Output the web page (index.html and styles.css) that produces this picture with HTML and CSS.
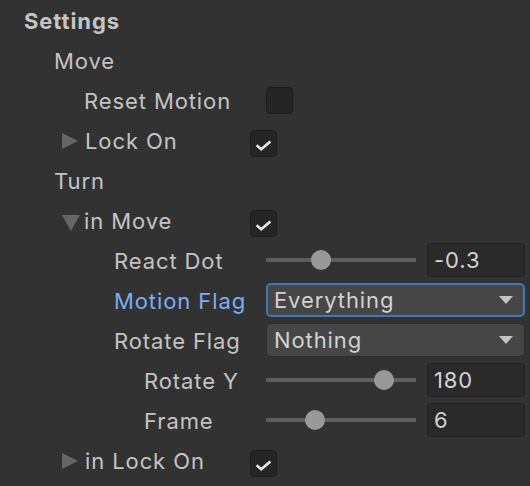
FILE: index.html
```html
<!DOCTYPE html>
<html>
<head>
<meta charset="utf-8">
<link rel="stylesheet" href="styles.css">
</head>
<body>
<div class="inspector">
  <div class="row"><div class="label i0 bold">Settings</div></div>
  <div class="row"><div class="label i1">Move</div></div>
  <div class="row">
    <div class="label i2">Reset Motion</div>
    <div class="field"><span class="checkbox"></span></div>
  </div>
  <div class="row">
    <div class="label fold"><span class="arrow-right"></span><span>Lock On</span></div>
    <div class="field"><span class="checkbox checked shifted"><svg width="17" height="11" viewBox="0 0 17 11"><path d="M1.6 5.2 L6.2 9.2 L15.4 1.4" fill="none" stroke="#e8e8e8" stroke-width="2.6"/></svg></span></div>
  </div>
  <div class="row"><div class="label i1">Turn</div></div>
  <div class="row">
    <div class="label fold"><span class="arrow-down"></span><span>in Move</span></div>
    <div class="field"><span class="checkbox checked shifted"><svg width="17" height="11" viewBox="0 0 17 11"><path d="M1.6 5.2 L6.2 9.2 L15.4 1.4" fill="none" stroke="#e8e8e8" stroke-width="2.6"/></svg></span></div>
  </div>
  <div class="row">
    <div class="label i3">React Dot</div>
    <div class="field">
      <div class="slider"><span class="track"></span><span class="knob" style="left:45px"></span></div>
      <div class="input">-0.3</div>
    </div>
  </div>
  <div class="row">
    <div class="label i3 focus">Motion Flag</div>
    <div class="field"><div class="dropdown active"><span>Everything</span><span class="caret"></span></div></div>
  </div>
  <div class="row">
    <div class="label i3">Rotate Flag</div>
    <div class="field"><div class="dropdown"><span>Nothing</span><span class="caret"></span></div></div>
  </div>
  <div class="row">
    <div class="label i4">Rotate Y</div>
    <div class="field">
      <div class="slider"><span class="track"></span><span class="knob" style="left:108px"></span></div>
      <div class="input">180</div>
    </div>
  </div>
  <div class="row">
    <div class="label i4">Frame</div>
    <div class="field">
      <div class="slider"><span class="track"></span><span class="knob" style="left:39px"></span></div>
      <div class="input">6</div>
    </div>
  </div>
  <div class="row">
    <div class="label fold"><span class="arrow-right"></span><span>in Lock On</span></div>
    <div class="field"><span class="checkbox checked shifted"><svg width="17" height="11" viewBox="0 0 17 11"><path d="M1.6 5.2 L6.2 9.2 L15.4 1.4" fill="none" stroke="#e8e8e8" stroke-width="2.6"/></svg></span></div>
  </div>
</div>
</body>
</html>
```

FILE: styles.css
```css
html, body {
  margin: 0;
  background: #323232;
}

body {
  font-family: Inter, "Noto Sans", sans-serif;
  font-size: 22px;
  letter-spacing: 0.9px;
  color: #c4c4c4;
}

.inspector {
  width: 525px;
  display: flex;
  flex-direction: column;
}

.row {
  height: 40px;
  display: flex;
  align-items: center;
}

.label {
  width: 266px;
  flex: none;
  box-sizing: border-box;
  display: flex;
  align-items: center;
  white-space: nowrap;
  padding-top: 1px;
}

.bold { font-weight: 700; }
.focus { color: #7cadf7; }

.i0 { padding-left: 24px; }
.i1 { padding-left: 54px; }
.i2 { padding-left: 84px; }
.i3 { padding-left: 114px; }
.i4 { padding-left: 144px; }

.fold {
  padding-left: 62px;
  gap: 7px;
}

.arrow-right {
  width: 0;
  height: 0;
  border-top: 8.5px solid transparent;
  border-bottom: 8.5px solid transparent;
  border-left: 16px solid #666666;
}

.arrow-down {
  width: 0;
  height: 0;
  border-left: 9.5px solid transparent;
  border-right: 9.5px solid transparent;
  border-top: 16px solid #666666;
  margin-right: -3px;
  margin-top: 4px;
}

.field {
  flex: 1;
  display: flex;
  align-items: center;
  gap: 11px;
}

.checkbox {
  width: 27px;
  height: 27px;
  box-sizing: border-box;
  background: #252525;
  border: 1px solid #1c1c1c;
  border-radius: 4px;
  display: flex;
  align-items: center;
  justify-content: center;
}

.checkbox.shifted {
  margin-left: -16px;
  margin-top: 7px;
}

.checkbox svg {
  margin-top: 4px;
}

.slider {
  position: relative;
  flex: 1;
  height: 20px;
  display: flex;
  align-items: center;
}

.track {
  flex: 1;
  height: 4px;
  background: #5e5e5e;
}

.knob {
  position: absolute;
  top: 0;
  width: 20px;
  height: 20px;
  border-radius: 50%;
  background: #999999;
}

.input {
  width: 98px;
  height: 34px;
  box-sizing: border-box;
  background: #2a2a2a;
  border: 1px solid #212121;
  border-radius: 4px;
  padding-left: 6px;
  display: flex;
  align-items: center;
  color: #d2d2d2;
}

.dropdown {
  flex: 1;
  height: 34px;
  box-sizing: border-box;
  background: #464646;
  border: 1px solid #2c2c2c;
  border-radius: 5px;
  padding: 0 11px 0 7px;
  display: flex;
  align-items: center;
  justify-content: space-between;
  color: #d2d2d2;
}

.dropdown.active {
  border: 2px solid #3a79bb;
  padding-left: 6px;
  padding-right: 10px;
}

.caret {
  width: 0;
  height: 0;
  border-left: 7px solid transparent;
  border-right: 7px solid transparent;
  border-top: 8px solid #c4c4c4;
}
```
